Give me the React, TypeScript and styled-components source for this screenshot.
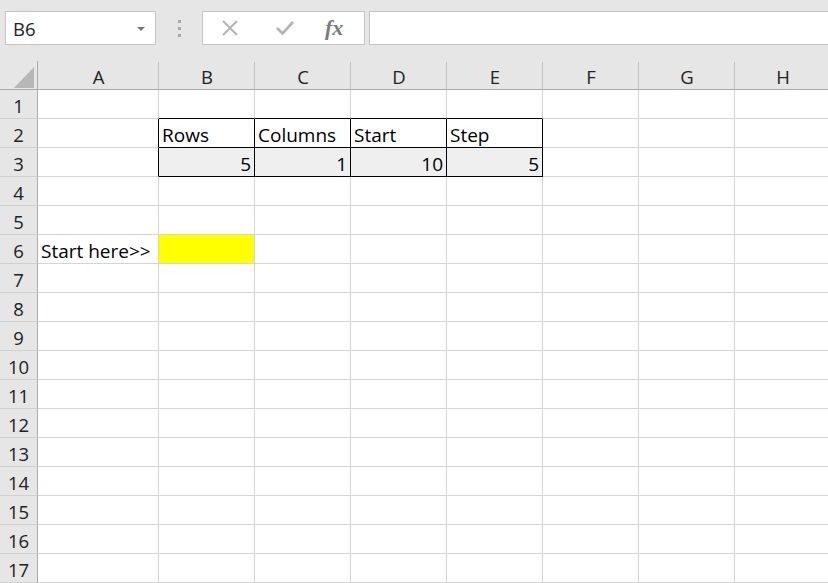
import React from "react";
import styled, { createGlobalStyle } from "styled-components";

const GlobalStyle = createGlobalStyle`
  html, body {
    margin: 0;
    padding: 0;
    background: #ffffff;
    overflow: hidden;
  }
`;

const Page = styled.div`
  width: 828px;
  height: 583px;
  overflow: hidden;
  background: #e6e6e6;
  font-family: "Noto Sans", "Open Sans", sans-serif;
`;

const Toolbar = styled.div`
  height: 61px;
  display: flex;
  align-items: flex-start;
  padding: 11px 0 0 5px;
  box-sizing: border-box;
`;

const NameBox = styled.div`
  width: 151px;
  height: 34px;
  box-sizing: border-box;
  background: #fff;
  border: 1px solid #c6c6c6;
  display: flex;
  align-items: center;
  justify-content: space-between;
  padding: 1px 10px 0 7px;
  font-family: "Open Sans", "Noto Sans", sans-serif;
  font-size: 18.5px;
  color: #222;
`;

const Caret = styled.span`
  width: 0;
  height: 0;
  border-left: 4px solid transparent;
  border-right: 4px solid transparent;
  border-top: 4px solid #777;
`;

const Grip = styled.div`
  width: 46px;
  height: 34px;
  display: flex;
  flex-direction: column;
  align-items: center;
  justify-content: center;
  gap: 4px;
`;

const GripDot = styled.span`
  width: 3px;
  height: 3px;
  background: #a8a8a8;
`;

const FormulaButtons = styled.div`
  width: 163px;
  height: 34px;
  box-sizing: border-box;
  background: #fff;
  border: 1px solid #c6c6c6;
  display: flex;
  align-items: center;
  padding: 0 0 0 18px;
`;

const ToolIcon = styled.span`
  width: 54px;
  display: flex;
  align-items: center;
`;

const Fx = styled.span`
  font-family: "Liberation Serif", "DejaVu Serif", serif;
  font-style: italic;
  font-weight: bold;
  font-size: 22px;
  color: #7a7a7a;
  margin-left: -4px;
`;

const FormulaInput = styled.div`
  flex: 1;
  height: 34px;
  margin-left: 4px;
  box-sizing: border-box;
  background: #fff;
  border: 1px solid #c6c6c6;
  border-right: none;
`;

const Sheet = styled.div`
  display: grid;
  grid-template-columns: 38px 121px repeat(7, 96px);
  grid-auto-rows: 29px;
  background: #fff;
`;

const Corner = styled.div`
  background: #e6e6e6;
  border-right: 1px solid #ababab;
  border-bottom: 1px solid #ababab;
  box-sizing: border-box;
  position: relative;
`;

const CornerTriangle = styled.span`
  position: absolute;
  right: 3px;
  bottom: 1px;
  width: 0;
  height: 0;
  border-left: 20px solid transparent;
  border-bottom: 21px solid #b7b7b7;
`;

const ColHeader = styled.div`
  background: #e6e6e6;
  border-bottom: 1px solid #ababab;
  box-sizing: border-box;
  display: flex;
  align-items: center;
  justify-content: center;
  font-family: "Open Sans", "Noto Sans", sans-serif;
  font-size: 18.5px;
  color: #222;
  position: relative;
  padding-top: 3px;

  &::after {
    content: "";
    position: absolute;
    right: 0;
    top: 1px;
    bottom: 0;
    width: 1px;
    background: #c3c3c3;
  }
`;

const RowHeader = styled.div`
  background: #e6e6e6;
  border-right: 1px solid #ababab;
  border-bottom: 1px solid #d0d0d0;
  box-sizing: border-box;
  display: flex;
  align-items: center;
  justify-content: center;
  font-family: "Open Sans", "Noto Sans", sans-serif;
  font-size: 18.5px;
  color: #222;
  padding-top: 2px;
`;

const Cell = styled.div<{
  $right: boolean;
  $bottom: boolean;
  $fill?: string;
  $align: "left" | "right";
}>`
  box-sizing: border-box;
  border-right: 1px solid ${({ $right }) => ($right ? "#000" : "#d4d4d4")};
  border-bottom: 1px solid ${({ $bottom }) => ($bottom ? "#000" : "#d4d4d4")};
  background: ${({ $fill }) => $fill || "#fff"};
  display: flex;
  align-items: center;
  justify-content: ${({ $align }) => ($align === "right" ? "flex-end" : "flex-start")};
  padding: 3px 3px 0 3px;
  font-family: "Open Sans", "Noto Sans", sans-serif;
  font-size: 19px;
  color: #000;
  white-space: nowrap;
  overflow: visible;
`;

const columns = ["A", "B", "C", "D", "E", "F", "G", "H"];
const ROWS = 17;

const values: Record<string, string | number> = {
  B2: "Rows",
  C2: "Columns",
  D2: "Start",
  E2: "Step",
  B3: 5,
  C3: 1,
  D3: 10,
  E3: 5,
  A6: "Start here>>",
};

// bordered table B2:E3
const inTable = (c: number, r: number) => c >= 1 && c <= 4 && r >= 2 && r <= 3;

const XIcon = () => (
  <svg width="18" height="18" viewBox="0 0 18 18">
    <path d="M2 2 L16 16 M16 2 L2 16" stroke="#b4b4b4" strokeWidth="2" fill="none" />
  </svg>
);

const CheckIcon = () => (
  <svg width="20" height="16" viewBox="0 0 20 16">
    <path d="M2 8 L7.5 13.5 L18 2" stroke="#b4b4b4" strokeWidth="2.6" fill="none" />
  </svg>
);

export default function App() {
  const cells: React.ReactNode[] = [];
  for (let r = 1; r <= ROWS; r++) {
    cells.push(<RowHeader key={`rh${r}`}>{r}</RowHeader>);
    for (let c = 0; c < columns.length; c++) {
      const id = `${columns[c]}${r}`;
      const v = values[id];
      const right = inTable(c, r) || inTable(c + 1, r);
      const bottom = inTable(c, r) || inTable(c, r + 1);
      let fill: string | undefined;
      if (id === "B6") fill = "#ffff00";
      else if (r === 3 && inTable(c, r)) fill = "#efefef";
      cells.push(
        <Cell
          key={id}
          $right={right}
          $bottom={bottom}
          $fill={fill}
          $align={typeof v === "number" ? "right" : "left"}
        >
          {v}
        </Cell>
      );
    }
  }

  return (
    <Page>
      <GlobalStyle />
      <Toolbar>
        <NameBox>
          B6
          <Caret />
        </NameBox>
        <Grip>
          <GripDot />
          <GripDot />
          <GripDot />
        </Grip>
        <FormulaButtons>
          <ToolIcon>
            <XIcon />
          </ToolIcon>
          <ToolIcon>
            <CheckIcon />
          </ToolIcon>
          <Fx>fx</Fx>
        </FormulaButtons>
        <FormulaInput />
      </Toolbar>
      <Sheet>
        <Corner>
          <CornerTriangle />
        </Corner>
        {columns.map((c) => (
          <ColHeader key={c}>{c}</ColHeader>
        ))}
        {cells}
      </Sheet>
    </Page>
  );
}
